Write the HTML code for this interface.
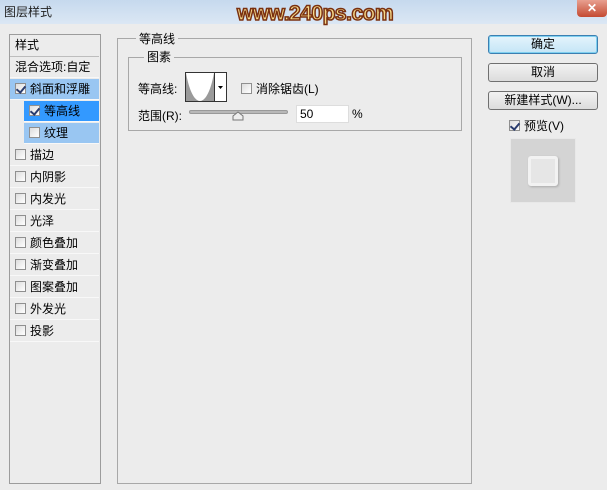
<!DOCTYPE html><html><head><meta charset="utf-8"><style>
*{margin:0;padding:0;box-sizing:border-box}
body{width:607px;height:490px;background:#ececec;font-family:"Liberation Sans","Noto Sans CJK SC",sans-serif;font-size:12px;color:#000;position:relative;overflow:hidden}
.a{position:absolute}
.t{left:0;top:0;width:607px;height:24px;background:linear-gradient(#c6d9ee,#dbe7f4)}
.cb{display:inline-block;width:11px;height:11px;border:1px solid #8f8f8f;background:linear-gradient(135deg,#ddd,#fff);vertical-align:-1px;margin-right:4px;position:relative}
.ck::after{content:"";position:absolute;left:2px;top:0px;width:4px;height:7px;border:solid #2a3c6e;border-width:0 2px 2px 0;transform:rotate(40deg)}
.row{position:absolute;left:10px;width:89px;height:21px;line-height:21px;padding-left:5px;border-bottom:1px solid #f8f8f8}
.btn{position:absolute;left:488px;width:110px;height:19px;border:1px solid #707070;border-radius:3px;background:linear-gradient(#f2f2f2,#dcdcdc);text-align:center;line-height:17px;font-size:12px}
fieldsetl{}
</style></head><body>
<div class="a t"></div>
<div class="a" style="left:4px;top:3px;font-size:12px;color:#222">图层样式</div>
<div class="a" style="left:237px;top:2px;font:bold 21px 'Liberation Sans',sans-serif;color:#f5d98a;-webkit-text-stroke:1.5px #7a3010;letter-spacing:-0.5px">www.240ps.com</div>
<div class="a" style="left:577px;top:0;width:30px;height:17px;background:linear-gradient(#e8a090,#c44a32);border-radius:0 0 4px 4px;color:#fff;text-align:center;font-weight:bold;line-height:16px">✕</div>

<div class="a" style="left:9px;top:34px;width:92px;height:450px;border:1px solid #9c9c9c;background:#ececec"></div>
<div class="row" style="top:35px;height:22px;border-bottom:1px solid #bdbdbd">样式</div>
<div class="row" style="top:57px">混合选项:自定</div>
<div class="row" style="top:79px;background:#99c6f2"><span class="cb ck"></span>斜面和浮雕</div>
<div class="row" style="top:101px;left:24px;width:75px;background:#3399ff"><span class="cb ck"></span>等高线</div>
<div class="row" style="top:123px;left:24px;width:75px;background:#99c6f2"><span class="cb"></span>纹理</div>
<div class="row" style="top:145px"><span class="cb"></span>描边</div>
<div class="row" style="top:167px"><span class="cb"></span>内阴影</div>
<div class="row" style="top:189px"><span class="cb"></span>内发光</div>
<div class="row" style="top:211px"><span class="cb"></span>光泽</div>
<div class="row" style="top:233px"><span class="cb"></span>颜色叠加</div>
<div class="row" style="top:255px"><span class="cb"></span>渐变叠加</div>
<div class="row" style="top:277px"><span class="cb"></span>图案叠加</div>
<div class="row" style="top:299px"><span class="cb"></span>外发光</div>
<div class="row" style="top:321px"><span class="cb"></span>投影</div>

<div class="a" style="left:117px;top:38px;width:355px;height:446px;border:1px solid #a8a8a8"></div>
<div class="a" style="left:136px;top:30px;background:#ececec;padding:0 3px">等高线</div>
<div class="a" style="left:128px;top:57px;width:334px;height:74px;border:1px solid #a8a8a8"></div>
<div class="a" style="left:144px;top:48px;background:#ececec;padding:0 3px">图素</div>
<div class="a" style="left:138px;top:80px">等高线:</div>
<div class="a" style="left:185px;top:72px;width:42px;height:30px;border:1px solid #333;background:#fff">
<svg width="40" height="28" style="position:absolute;left:0;top:0"><path d="M0 0 L0 28 L28 28 L28 0 C24 22 18 28 14 28 C10 28 4 22 0 0Z" fill="#9a9a9a"/><line x1="28.5" y1="0" x2="28.5" y2="28" stroke="#333"/><path d="M32 13 L37 13 L34.5 16Z" fill="#000"/></svg></div>
<div class="a" style="left:241px;top:80px"><span class="cb"></span>消除锯齿(L)</div>
<div class="a" style="left:138px;top:107px">范围(R):</div>
<div class="a" style="left:189px;top:110px;width:99px;height:4px;border-radius:2px;background:#b8b8b8;border:1px solid #999"></div>
<svg class="a" style="left:232px;top:111px" width="12" height="10"><path d="M1 9 L1 5 L6 1 L11 5 L11 9Z" fill="#eee" stroke="#777"/></svg>
<div class="a" style="left:296px;top:105px;width:53px;height:18px;background:#fff;border:1px solid #ddd;padding-left:3px;line-height:17px">50</div>
<div class="a" style="left:352px;top:107px">%</div>

<div class="btn" style="top:35px;border-color:#3c7fb1;background:linear-gradient(#e5f4fc,#c4e5f6);box-shadow:inset 0 0 0 1px #7fd0f0">确定</div>
<div class="btn" style="top:63px">取消</div>
<div class="btn" style="top:91px">新建样式(W)...</div>
<div class="a" style="left:509px;top:117px"><span class="cb ck"></span>预览(V)</div>
<div class="a" style="left:510px;top:138px;width:66px;height:65px;background:#d4d4d4;border:1px solid #e8e8e8"></div>
<div class="a" style="left:528px;top:156px;width:30px;height:30px;background:#e6e6e6;border:3px solid #f2f2f2;box-shadow:1px 1px 2px #aaa;border-radius:3px"></div>
</body></html>
